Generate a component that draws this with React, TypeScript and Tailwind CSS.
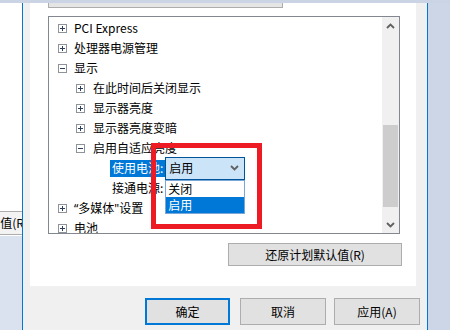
const font = { fontFamily: '"Noto Sans CJK SC", "Noto Sans", sans-serif' };

function Expander({ open }: { open?: boolean }) {
  return (
    <svg width="9" height="9" viewBox="0 0 9 9" className="shrink-0">
      <rect x="0.5" y="0.5" width="8" height="8" fill="#fff" stroke="#8e9399" />
      <line x1="2" y1="4.5" x2="7" y2="4.5" stroke="#2c3e5c" />
      {!open && <line x1="4.5" y1="2" x2="4.5" y2="7" stroke="#2c3e5c" />}
    </svg>
  );
}

function Chevron({ up }: { up?: boolean }) {
  return (
    <svg width="9" height="6" viewBox="0 0 9 6">
      <path d={up ? 'M1 5 L4.5 1.5 L8 5' : 'M1 1 L4.5 4.5 L8 1'} fill="none" stroke="#606060" strokeWidth="1.8" />
    </svg>
  );
}

type Row = { label: string; level: number; open?: boolean };

const rows: Row[] = [
  { label: 'PCI Express', level: 0 },
  { label: '处理器电源管理', level: 0 },
  { label: '显示', level: 0, open: true },
  { label: '在此时间后关闭显示', level: 1 },
  { label: '显示器亮度', level: 1 },
  { label: '显示器亮度变暗', level: 1 },
  { label: '启用自适应亮度', level: 1, open: true },
];

export default function App() {
  return (
    <div className="relative w-[450px] h-[330px] overflow-hidden bg-[#cad4e4] flex flex-col text-[12px] text-black" style={font}>
      <div className="h-[3px] shrink-0" />
      <div className="flex flex-1">
        {/* window behind */}
        <div className="w-[22px] flex flex-col bg-[#d9e2ee]">
          <div className="h-[207px] bg-white" />
          <div className="h-[26px] bg-white overflow-hidden flex items-center">
            <div className="h-[24px] w-full bg-[#f3f3f3] border-t border-b border-[#adadad] flex items-center justify-end leading-none">
              <span className="shrink-0 whitespace-nowrap -mr-[6px]">值(R)</span>
            </div>
          </div>
        </div>
        <div className="w-px bg-[#0078d7]" />

        {/* dialog */}
        <div className="w-[404px] bg-[#f0f0f0] flex flex-col">
          <div className="ml-[7px] w-[386px] h-[283px] bg-white flex flex-col">
            <div className="ml-[18px] w-[235px] h-[5px] bg-[#e5e5e5] border-l border-r border-b border-[#adadad]" />

            <div className="mt-[8px] ml-[18px] w-[352px] h-[218px] border border-[#828790] flex overflow-hidden">
              <div className="flex-1 pt-[1px] leading-none">
                {rows.map((r) => (
                  <div key={r.label} className={`h-[20px] flex items-center ${r.level === 0 ? 'pl-[9px]' : 'pl-[27px]'}`}>
                    <Expander open={r.open} />
                    <span className={r.level === 0 ? 'ml-[7px]' : 'ml-[8px]'}>{r.label}</span>
                  </div>
                ))}
                <div className="h-[20px] flex items-center pl-[61px]">
                  <span className="h-[17px] flex items-center px-[2px] bg-[#0078d7] text-white">使用电池:</span>
                  <div className="relative z-10">
                    <div className="w-[80px] h-[23px] bg-[#cce4f7] border border-[#005499] flex items-center justify-between pl-[3px] pr-[5px]">
                      <span>启用</span>
                      <Chevron />
                    </div>
                    <div className="absolute top-full left-0 w-[80px] bg-white border border-[#7aa7d8]">
                      <div className="h-[16px] flex items-center pl-[2px]">关闭</div>
                      <div className="h-[16px] flex items-center pl-[2px] bg-[#0078d7] text-white">启用</div>
                    </div>
                  </div>
                </div>
                <div className="h-[20px] flex items-center pl-[61px]">
                  <span className="px-[2px]">接通电源:</span>
                </div>
                <div className="h-[20px] flex items-center pl-[9px]">
                  <Expander />
                  <span className="ml-[7px]">
                    <span className="font-['Noto_Sans']">“</span>多媒体<span className="font-['Noto_Sans']">"</span>设置
                  </span>
                </div>
                <div className="h-[20px] flex items-center pl-[9px]">
                  <Expander />
                  <span className="ml-[7px]">电池</span>
                </div>
              </div>
              <div className="w-[17px] bg-[#f0f0f0] flex flex-col">
                <div className="h-[17px] flex items-center justify-center">
                  <Chevron up />
                </div>
                <div className="flex-1">
                  <div className="mt-[91px] ml-px w-[15px] h-[82px] bg-[#cdcdcd]" />
                </div>
                <div className="h-[17px] flex items-center justify-center">
                  <Chevron />
                </div>
              </div>
            </div>

            <div className="mt-[9px] ml-[198px] w-[174px] h-[23px] bg-[#e1e1e1] border border-[#adadad] flex items-center justify-center">
              还原计划默认值(R)
            </div>
          </div>

          <div className="mt-[12px] ml-[122px] flex">
            <div className="w-[85px] h-[27px] bg-[#e1e1e1] border-2 border-[#0078d7] flex items-center justify-center">确定</div>
            <div className="ml-[10px] w-[86px] h-[27px] bg-[#e1e1e1] border border-[#adadad] flex items-center justify-center">取消</div>
            <div className="ml-[8px] w-[86px] h-[27px] bg-[#e1e1e1] border border-[#adadad] flex items-center justify-center">应用(A)</div>
          </div>
        </div>

        <div className="w-px bg-[#0078d7]" />
        <div className="flex-1 bg-[#ccd6e6]" />
      </div>

      {/* annotation */}
      <div className="absolute left-[151px] top-[143px] w-[111px] h-[86px] border-[5px] border-[#ed1c24] z-20" />
    </div>
  );
}
